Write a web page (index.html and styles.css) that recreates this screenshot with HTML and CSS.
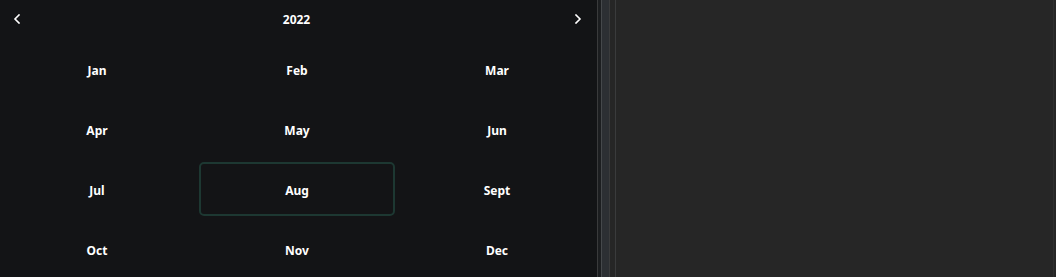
FILE: index.html
```html
<!DOCTYPE html>
<html>
<head>
<meta charset="utf-8">
<link rel="stylesheet" href="styles.css">
</head>
<body>
<div class="app">
  <section class="picker">
    <header class="picker-head">
      <button class="nav nav-prev" aria-label="Previous year">
        <svg width="8" height="10" viewBox="0 0 8 10"><path d="M6 1 L2 5 L6 9" fill="none" stroke="#fff" stroke-width="1.6" stroke-linecap="square"/></svg>
      </button>
      <div class="year">2022</div>
      <button class="nav nav-next" aria-label="Next year">
        <svg width="8" height="10" viewBox="0 0 8 10"><path d="M2 1 L6 5 L2 9" fill="none" stroke="#fff" stroke-width="1.6" stroke-linecap="square"/></svg>
      </button>
    </header>
    <div class="months">
      <div class="month">Jan</div>
      <div class="month">Feb</div>
      <div class="month">Mar</div>
      <div class="month">Apr</div>
      <div class="month">May</div>
      <div class="month">Jun</div>
      <div class="month">Jul</div>
      <div class="month selected">Aug</div>
      <div class="month">Sept</div>
      <div class="month">Oct</div>
      <div class="month">Nov</div>
      <div class="month">Dec</div>
    </div>
  </section>
  <div class="splitter">
    <div class="sp-line"></div>
    <div class="sp-a"></div>
    <div class="sp-line2"></div>
    <div class="sp-b"></div>
    <div class="sp-line"></div>
    <div class="sp-c"></div>
    <div class="sp-line"></div>
  </div>
  <section class="pane">
    <div class="pane-fill"></div>
    <div class="pane-edge"></div>
  </section>
</div>
</body>
</html>
```
FILE: styles.css
```css
html, body {
  margin: 0;
  padding: 0;
  background: #262626;
}
body {
  font-family: "Noto Sans", "Open Sans", sans-serif;
  width: 1056px;
  height: 277px;
  overflow: hidden;
}
.app {
  display: flex;
  height: 277px;
}
.picker {
  width: 597px;
  flex: none;
  background: #131416;
  color: #fff;
  overflow: hidden;
}
.picker-head {
  height: 38px;
  display: flex;
  align-items: center;
  justify-content: space-between;
  padding: 0 15px 0 13px;
}
.nav {
  background: none;
  border: none;
  padding: 0;
  width: 8px;
  height: 10px;
  display: flex;
  margin-top: -1px;
}
.year {
  font-size: 12px;
  font-weight: 700;
  margin-right: 2px;
}
.months {
  display: grid;
  grid-template-columns: repeat(3, 196px);
  grid-auto-rows: 54px;
  column-gap: 4px;
  row-gap: 6px;
  padding-top: 4px;
  margin-left: -1px;
}
.month {
  display: flex;
  align-items: center;
  justify-content: center;
  font-size: 12px;
  font-weight: 700;
  padding-top: 3px;
  box-sizing: border-box;
  border: 2px solid transparent;
  border-radius: 5px;
}
.month.selected {
  border-color: #1d3832;
}
.splitter {
  display: flex;
  flex: none;
  height: 100%;
}
.sp-line { width: 1px; background: #3a3b3c; }
.sp-line2 { width: 1px; background: #45484b; }
.sp-a { width: 3px; background: #1c1e20; }
.sp-b { width: 7px; background: #2c2f33; }
.sp-c { width: 5px; background: #262626; }
.pane {
  flex: 1;
  display: flex;
}
.pane-fill {
  flex: 1;
  background: #262626;
}
.pane-edge {
  width: 1px;
  margin-right: 2px;
  background: #2f2f2f;
}
```
